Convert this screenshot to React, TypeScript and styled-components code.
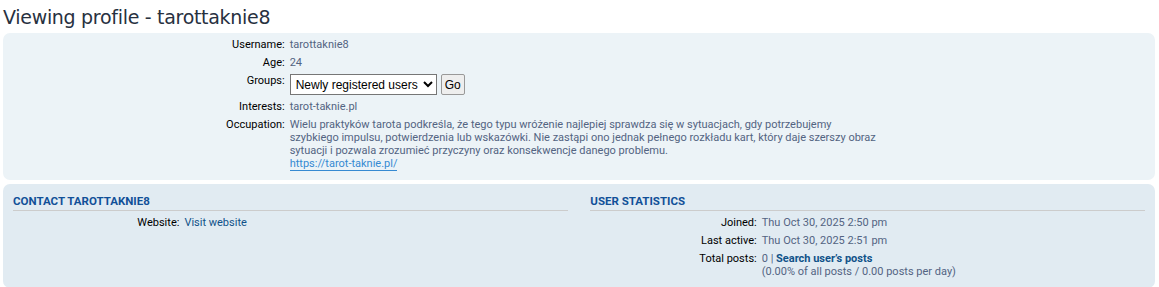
import React from "react";
import styled, { createGlobalStyle } from "styled-components";

const Global = createGlobalStyle`
  html, body { margin: 0; padding: 0; background: #ffffff; }
  body { font-family: Roboto, "Liberation Sans", Arial, sans-serif; font-size: 11px; color: #536482; }
  #root { padding: 0 4px 0 3px; }
`;

const Title = styled.h2`
  margin: 5px 0 4px 0;
  font-family: "DejaVu Sans", "Trebuchet MS", sans-serif;
  font-weight: normal;
  font-size: 19px;
  line-height: 24px;
  color: #28313f;
  letter-spacing: -0.3px;
`;

const Panel = styled.div<{ $bg: string }>`
  background: ${(p) => p.$bg};
  border-radius: 7px;
  padding: 5px 10px;
  margin-bottom: 4px;
  overflow: hidden;
`;

const Details = styled.dl<{ $width?: string }>`
  margin: 0 0 5px 0;
  width: ${(p) => p.$width || "100%"};
  display: grid;
  grid-template-columns: 30% calc(65% + 5px);
  row-gap: 5px;
  line-height: 13px;
`;

const Label = styled.dt`
  text-align: right;
  color: #000000;
`;

const Value = styled.dd`
  margin: 0;
  padding-left: 5px;
  color: #536482;
`;

const Select = styled.select`
  font-family: "Liberation Sans", Arial, sans-serif;
  font-size: 12px;
  height: 21px;
  padding: 0 1px;
  border: 1px solid #767676;
  background: #fff;
  color: #000;
  border-radius: 0;
  vertical-align: top;
`;

const GoButton = styled.button`
  font-family: "Liberation Sans", Arial, sans-serif;
  font-size: 12px;
  height: 21px;
  margin-left: 4px;
  padding: 0 3px;
  border: 1px solid #999;
  background: #eeeeee;
  color: #000;
  border-radius: 2px;
  vertical-align: top;
`;

const UrlLink = styled.a`
  color: #368ad2;
  text-decoration: none;
  border-bottom: 1px solid #368ad2;
`;

const Link = styled.a<{ $bold?: boolean }>`
  color: #105289;
  text-decoration: none;
  font-weight: ${(p) => (p.$bold ? "bold" : "normal")};
`;

const Columns = styled.div`
  display: flex;
  justify-content: space-between;
`;

const Column = styled.div`
  width: 49%;
`;

const SectionTitle = styled.h3`
  margin: 6px 0 5px 0;
  padding-bottom: 2px;
  border-bottom: 1px solid #cccccc;
  font-family: Roboto, "Liberation Sans", Arial, sans-serif;
  font-size: 11.5px;
  line-height: 13px;
  font-weight: bold;
  text-transform: uppercase;
  color: #115098;
`;

export default function App() {
  return (
    <>
      <Global />
      <Title>Viewing profile - tarottaknie8</Title>
      <Panel $bg="#ecf3f7">
        <Details $width="80%">
          <Label>Username:</Label>
          <Value>tarottaknie8</Value>
          <Label>Age:</Label>
          <Value>24</Value>
          <Label>Groups:</Label>
          <Value>
            <Select defaultValue="n">
              <option value="n">Newly registered users</option>
            </Select>
            <GoButton>Go</GoButton>
          </Value>
          <Label>Interests:</Label>
          <Value>tarot-taknie.pl</Value>
          <Label>Occupation:</Label>
          <Value>
            Wielu praktyków tarota podkreśla, że tego typu wróżenie najlepiej sprawdza się w sytuacjach, gdy potrzebujemy szybkiego impulsu, potwierdzenia lub wskazówki. Nie zastąpi ono jednak pełnego rozkładu kart, który daje szerszy obraz sytuacji i pozwala zrozumieć przyczyny oraz konsekwencje danego problemu.
            <br />
            <UrlLink href="#">https://tarot-taknie.pl/</UrlLink>
          </Value>
        </Details>
      </Panel>
      <Panel $bg="#e1ebf2">
        <Columns>
          <Column>
            <SectionTitle>Contact tarottaknie8</SectionTitle>
            <Details>
              <Label>Website:</Label>
              <Value>
                <Link href="#">Visit website</Link>
              </Value>
            </Details>
          </Column>
          <Column>
            <SectionTitle>User statistics</SectionTitle>
            <Details>
              <Label>Joined:</Label>
              <Value>Thu Oct 30, 2025 2:50 pm</Value>
              <Label>Last active:</Label>
              <Value>Thu Oct 30, 2025 2:51 pm</Value>
              <Label>Total posts:</Label>
              <Value>
                0 | <Link href="#" $bold>Search user’s posts</Link>
                <br />
                (0.00% of all posts / 0.00 posts per day)
              </Value>
            </Details>
          </Column>
        </Columns>
      </Panel>
    </>
  );
}
